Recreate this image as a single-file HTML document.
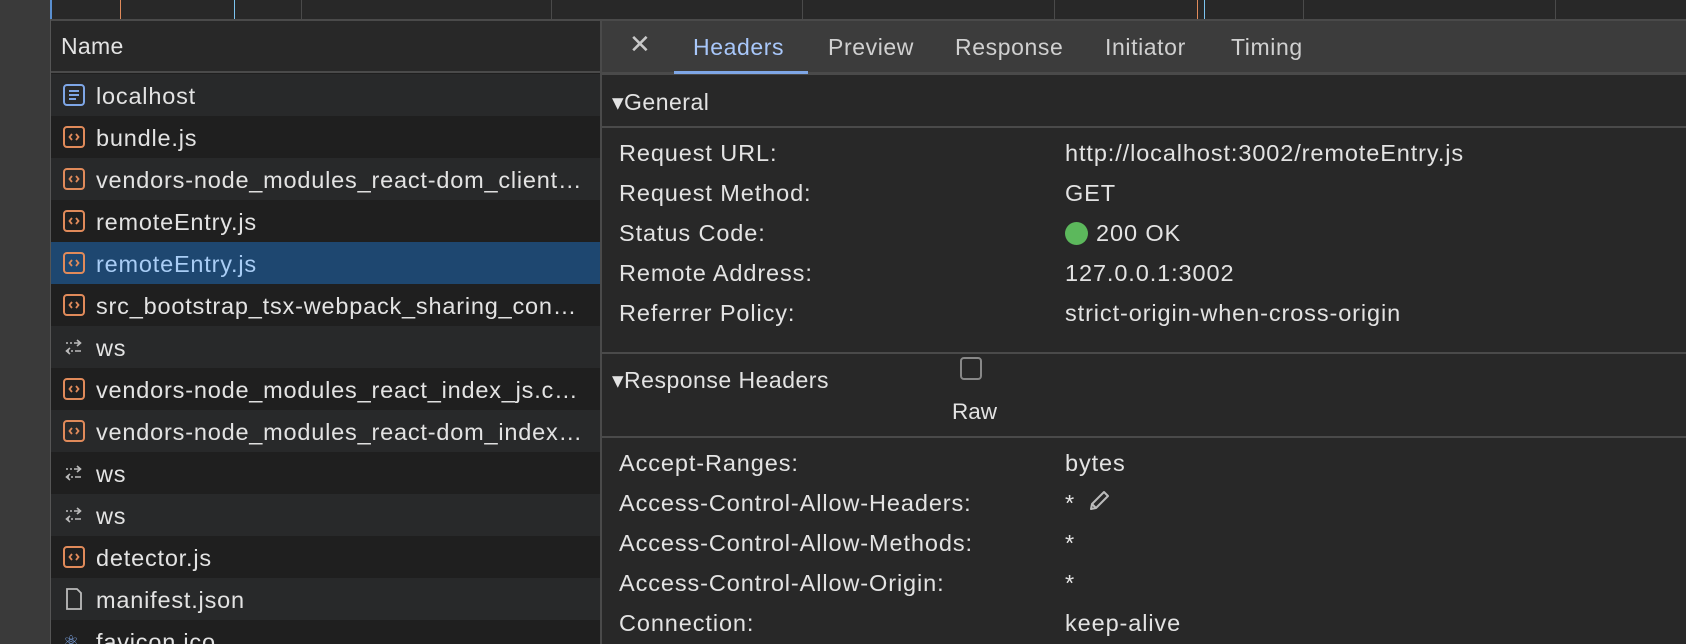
<!DOCTYPE html>
<html><head><meta charset="utf-8"><style>
*{margin:0;padding:0;box-sizing:border-box}
html,body{overflow:hidden}
body{width:1686px;height:644px;background:#282828;font-family:"Liberation Sans",sans-serif;color:#e3e3e3;position:relative}
.abs{position:absolute}
.side{left:0;top:0;width:50px;height:644px;background:#3a3a3a}
.strip{left:50px;top:0;width:1636px;height:19px;background:#282828;border-left:2px solid #5a8fd0}
.vl{position:absolute;top:0;width:1px;height:19px;background:#4a4a4a}
.left{left:50px;top:19px;width:551px;height:625px;background:#1f1f1f;border-left:1px solid #555}
.hdr{left:51px;top:19px;width:549px;height:54px;background:#282828;border-top:2px solid #4a4a4a;border-bottom:2px solid #4a4a4a;font-size:23px;line-height:50px;padding-left:10px;letter-spacing:0.3px}
.row{position:absolute;left:51px;width:549px;height:42px;font-size:23.5px;line-height:44px;padding-left:45px;white-space:nowrap;letter-spacing:0.8px;overflow:hidden}
.row.e{background:#28292a}
.row.sel{background:#1e4770;color:#a9cdf5}
.ic{position:absolute;left:12px;top:10px;width:22px;height:22px}
.right{left:600px;top:19px;width:1086px;height:625px;background:#282828;border-left:2px solid #4a4a4a}
.tabs{left:602px;top:19px;width:1084px;height:56px;background:#3c3c3c;border-top:2px solid #4a4a4a;border-bottom:3px solid #4a4a4a;font-size:23px;color:#d0d0d0;letter-spacing:0.6px}
.tab{position:absolute;top:13px}
.sec{position:absolute;left:602px;width:1084px;font-size:23px;letter-spacing:0.5px}
.lbl{position:absolute;left:619px;font-size:23.5px;color:#e3e3e3;letter-spacing:0.9px}
.val{position:absolute;left:1065px;font-size:23.5px;color:#e3e3e3;letter-spacing:0.9px}
</style></head><body>
<svg width="0" height="0" style="position:absolute"><defs>
<symbol id="code" viewBox="0 0 22 22"><rect x="1" y="1" width="20" height="20" rx="3" fill="none" stroke="#e08a5a" stroke-width="2"/><path d="M9 8 L6.5 11 L9 14 M13 8 L15.5 11 L13 14" fill="none" stroke="#e08a5a" stroke-width="1.8"/></symbol>
<symbol id="ws" viewBox="0 0 22 22"><path d="M3 7 H5 M7 7 H9 M11 7 H17 M18 15 H12 M10 15 H8 M6 15 H4" fill="none" stroke="#bbb" stroke-width="1.6"/><path d="M14 4 L17.5 7 L14 10 M7 12 L3.5 15 L7 18" fill="none" stroke="#bbb" stroke-width="1.6"/></symbol>
</defs></svg>
<div class="abs side"></div>
<div class="abs strip">
<div class="vl" style="left:68px;background:#e08a5a"></div>
<div class="vl" style="left:182px;background:#7cc4f0"></div>
<div class="vl" style="left:249px"></div>
<div class="vl" style="left:499px"></div>
<div class="vl" style="left:750px"></div>
<div class="vl" style="left:1002px"></div>
<div class="vl" style="left:1145px;background:#e08a5a"></div>
<div class="vl" style="left:1152px;background:#7cc4f0"></div>
<div class="vl" style="left:1251px"></div>
<div class="vl" style="left:1503px"></div>
</div>
<div class="abs left"></div>
<div class="abs hdr">Name</div>
<div class="row e" style="top:74px"><svg class="ic" viewBox="0 0 22 22"><rect x="1" y="1" width="20" height="20" rx="3" fill="none" stroke="#7ea6e6" stroke-width="2"/><path d="M6 7 H16 M6 11 H16 M6 15 H13" stroke="#7ea6e6" stroke-width="2"/></svg>localhost</div>
<div class="row" style="top:116px"><svg class="ic"><use href="#code"/></svg>bundle.js</div>
<div class="row e" style="top:158px"><svg class="ic"><use href="#code"/></svg>vendors-node_modules_react-dom_client…</div>
<div class="row" style="top:200px"><svg class="ic"><use href="#code"/></svg>remoteEntry.js</div>
<div class="row sel" style="top:242px"><svg class="ic"><use href="#code"/></svg>remoteEntry.js</div>
<div class="row" style="top:284px"><svg class="ic"><use href="#code"/></svg>src_bootstrap_tsx-webpack_sharing_con…</div>
<div class="row e" style="top:326px"><svg class="ic"><use href="#ws"/></svg>ws</div>
<div class="row" style="top:368px"><svg class="ic"><use href="#code"/></svg>vendors-node_modules_react_index_js.c…</div>
<div class="row e" style="top:410px"><svg class="ic"><use href="#code"/></svg>vendors-node_modules_react-dom_index…</div>
<div class="row" style="top:452px"><svg class="ic"><use href="#ws"/></svg>ws</div>
<div class="row e" style="top:494px"><svg class="ic"><use href="#ws"/></svg>ws</div>
<div class="row" style="top:536px"><svg class="ic"><use href="#code"/></svg>detector.js</div>
<div class="row e" style="top:578px"><svg class="ic" viewBox="0 0 22 22"><path d="M4 1 H14 L18 5 V21 H4 Z" fill="none" stroke="#bbb" stroke-width="1.8"/></svg>manifest.json</div>
<div class="row" style="top:620px;height:24px"><span class="abs" style="left:12px;top:0;font-size:18px;color:#7ea6e6">⚛</span>favicon.ico</div>

<div class="abs right"></div>
<div class="abs tabs">
<div class="tab" style="left:27px;font-size:26px;top:8px;color:#c8c8c8">✕</div>
<div class="tab" style="left:91px;color:#a8c7fa">Headers</div>
<div class="tab" style="left:226px">Preview</div>
<div class="tab" style="left:353px">Response</div>
<div class="tab" style="left:503px">Initiator</div>
<div class="tab" style="left:629px">Timing</div>
<div class="abs" style="left:72px;top:50px;width:134px;height:3px;background:#7ea6e6"></div>
</div>
<div class="sec" style="top:89px;left:612px">▾General</div>
<div class="abs" style="left:602px;top:126px;width:1084px;height:2px;background:#4a4a4a"></div>
<div class="lbl" style="top:140px">Request URL:</div><div class="val" style="top:140px">http://localhost:3002/remoteEntry.js</div>
<div class="lbl" style="top:180px">Request Method:</div><div class="val" style="top:180px">GET</div>
<div class="lbl" style="top:220px">Status Code:</div><div class="val" style="top:220px"><span style="display:inline-block;width:23px;height:23px;border-radius:50%;background:#5cb85c;vertical-align:-4px;margin-right:8px"></span>200 OK</div>
<div class="lbl" style="top:260px">Remote Address:</div><div class="val" style="top:260px">127.0.0.1:3002</div>
<div class="lbl" style="top:300px">Referrer Policy:</div><div class="val" style="top:300px">strict-origin-when-cross-origin</div>
<div class="abs" style="left:602px;top:352px;width:1084px;height:2px;background:#4a4a4a"></div>
<div class="sec" style="top:367px;left:612px">▾Response Headers</div>
<div class="abs" style="left:960px;top:357px;width:22px;height:23px;border:2px solid #888;border-radius:4px"></div>
<div class="abs" style="left:952px;top:399px;font-size:22.5px">Raw</div>
<div class="abs" style="left:602px;top:436px;width:1084px;height:2px;background:#4a4a4a"></div>
<div class="lbl" style="top:450px">Accept-Ranges:</div><div class="val" style="top:450px">bytes</div>
<div class="lbl" style="top:490px">Access-Control-Allow-Headers:</div><div class="val" style="top:490px">*</div>
<svg class="abs" style="left:1087px;top:489px" width="24" height="24" viewBox="0 0 24 24"><path d="M4 20 L5 15 L17 3 L21 7 L9 19 Z M5 15 L9 19" fill="none" stroke="#bbb" stroke-width="2" stroke-linejoin="round"/></svg>
<div class="lbl" style="top:530px">Access-Control-Allow-Methods:</div><div class="val" style="top:530px">*</div>
<div class="lbl" style="top:570px">Access-Control-Allow-Origin:</div><div class="val" style="top:570px">*</div>
<div class="lbl" style="top:610px">Connection:</div><div class="val" style="top:610px">keep-alive</div>
</body></html>
